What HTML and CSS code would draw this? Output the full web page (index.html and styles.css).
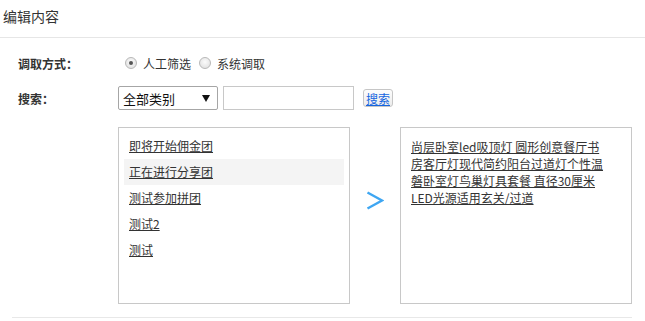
FILE: index.html
```html
<!DOCTYPE html>
<html lang="zh-CN">
<head>
<meta charset="utf-8">
<title>编辑内容</title>
<link rel="stylesheet" href="styles.css">
</head>
<body>
<div class="header">编辑内容</div>
<div class="form">
  <div class="row row-mode">
    <span class="label">调取方式：</span>
    <div class="controls">
      <label class="opt"><span class="radio checked"></span>人工筛选</label>
      <label class="opt"><span class="radio"></span>系统调取</label>
    </div>
  </div>
  <div class="row row-search">
    <span class="label">搜索：</span>
    <div class="controls">
      <div class="select"><span>全部类别</span><span class="caret"></span></div>
      <input class="input" type="text">
      <button class="btn" type="button">搜索</button>
    </div>
  </div>
  <div class="lists">
    <ul class="box box-left">
      <li><a href="#">即将开始佣金团</a></li>
      <li class="active"><a href="#">正在进行分享团</a></li>
      <li><a href="#">测试参加拼团</a></li>
      <li><a href="#">测试2</a></li>
      <li><a href="#">测试</a></li>
    </ul>
    <div class="arrow">
      <svg width="18" height="19" viewBox="0 0 18 19"><polyline points="1.5,1.5 16,9.5 1.5,17.5" fill="none" stroke="#3ea6f2" stroke-width="2.4" stroke-linejoin="miter"/></svg>
    </div>
    <div class="box box-right">
      <a href="#">尚层卧室led吸顶灯 圆形创意餐厅书房客厅灯现代简约阳台过道灯个性温磐卧室灯鸟巢灯具套餐 直径30厘米LED光源适用玄关/过道</a>
    </div>
  </div>
</div>
</body>
</html>
```
FILE: styles.css
```css
* { box-sizing: border-box; }
body {
  margin: 0;
  font-family: "Noto Sans CJK SC", "Microsoft YaHei", sans-serif;
  font-size: 12px;
  color: #333;
  background: #fff;
}
.header {
  height: 38px;
  line-height: 32px;
  padding-left: 3px;
  font-size: 14px;
  color: #333;
  border-bottom: 1px solid #e6e6e6;
}
.form {
  margin: 0 13px 0 12px;
  padding-top: 13px;
  padding-bottom: 13px;
  border-bottom: 1px solid #e8e8e8;
}
.row {
  display: flex;
  align-items: center;
  height: 24px;
}
.row-search { margin-top: 11px; }
.label {
  width: 106px;
  padding-left: 6px;
  font-weight: bold;
  color: #333;
}
.controls {
  display: flex;
  align-items: center;
}
.opt {
  display: flex;
  align-items: center;
  margin-right: 6px;
}
.radio {
  width: 12px;
  height: 12px;
  border-radius: 50%;
  border: 1px solid #b8b8b8;
  background: radial-gradient(circle at 50% 40%, #fbfbfb, #dcdcdc);
  margin: 0 6px 0 7px;
  position: relative;
}
.opt + .opt .radio { margin-left: 2px; }
.radio.checked::after {
  content: "";
  position: absolute;
  left: 3px;
  top: 3px;
  width: 4px;
  height: 4px;
  border-radius: 50%;
  background: #555;
}
.select {
  width: 100px;
  height: 24px;
  border: 1px solid #a6a6a6;
  border-radius: 2px;
  display: flex;
  align-items: center;
  justify-content: space-between;
  padding: 0 7px 0 4px;
  font-size: 13px;
  color: #111;
}
.caret {
  width: 0;
  height: 0;
  border-left: 4px solid transparent;
  border-right: 4px solid transparent;
  border-top: 7px solid #111;
}
.input {
  width: 131px;
  height: 24px;
  margin: 0 0 0 5px;
  border: 1px solid #c8c8c8;
  padding: 0 4px;
  font: inherit;
}
.btn {
  margin-left: 9px;
  width: 30px;
  height: 18px;
  padding: 0;
  border: 1px solid #c6c6c6;
  border-radius: 3px;
  background: linear-gradient(#fdfdfd, #ececec);
  font: inherit;
  font-size: 12px;
  line-height: 15px;
  color: #1565e0;
  text-decoration: underline;
}
.lists {
  display: flex;
  align-items: flex-start;
  margin-top: 17px;
  padding-left: 106px;
}
.box {
  width: 232px;
  height: 177px;
  border: 1px solid #c8c8c8;
  margin: 0;
  list-style: none;
}
.box a {
  color: #333;
  text-decoration: underline;
}
.box-left {
  padding: 5px 5px;
}
.box-left li {
  height: 26px;
  line-height: 26px;
  padding-left: 5px;
}
.box-left li.active { background: #f4f4f4; }
.arrow {
  width: 50px;
  display: flex;
  justify-content: center;
  margin-top: 64px;
}
.arrow svg { display: block; }
.box-right {
  padding: 10px 24px 10px 10px;
  line-height: 17px;
}
```
